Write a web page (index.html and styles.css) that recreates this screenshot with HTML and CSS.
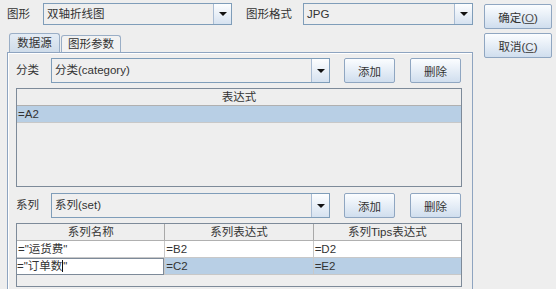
FILE: index.html
```html
<!DOCTYPE html>
<html lang="zh-CN">
<head>
    <meta charset="UTF-8">
    <title>图形</title>
    <link rel="stylesheet" href="styles.css">
</head>
<body>
    <div class="dialog">
        <div class="main">
            <div class="top-row">
                <span class="label label-chart">图形</span>
                <div class="combo combo-chart">
                    <span class="combo-text">双轴折线图</span>
                    <span class="combo-arrow"></span>
                </div>
                <span class="label label-format">图形格式</span>
                <div class="combo combo-format">
                    <span class="combo-text">JPG</span>
                    <span class="combo-arrow"></span>
                </div>
            </div>

            <div class="tabs">
                <span class="tab tab-active">数据源</span>
                <span class="tab">图形参数</span>
            </div>

            <div class="panel">
                <div class="field-row">
                    <span class="label field-label">分类</span>
                    <div class="combo combo-wide">
                        <span class="combo-text">分类(category)</span>
                        <span class="combo-arrow"></span>
                    </div>
                    <button class="btn btn-small btn-add">添加</button>
                    <button class="btn btn-small btn-del">删除</button>
                </div>

                <div class="table table-category">
                    <div class="thead">
                        <div class="th">表达式</div>
                    </div>
                    <div class="tr">
                        <div class="td td-selected">=A2</div>
                    </div>
                </div>

                <div class="field-row field-row-series">
                    <span class="label field-label">系列</span>
                    <div class="combo combo-wide">
                        <span class="combo-text">系列(set)</span>
                        <span class="combo-arrow"></span>
                    </div>
                    <button class="btn btn-small btn-add">添加</button>
                    <button class="btn btn-small btn-del">删除</button>
                </div>

                <div class="table table-series">
                    <div class="thead">
                        <div class="th">系列名称</div>
                        <div class="th">系列表达式</div>
                        <div class="th">系列Tips表达式</div>
                    </div>
                    <div class="tr">
                        <div class="td">="运货费"</div>
                        <div class="td">=B2</div>
                        <div class="td">=D2</div>
                    </div>
                    <div class="tr">
                        <div class="td td-editing">="订单数<span class="caret"></span>"</div>
                        <div class="td td-selected">=C2</div>
                        <div class="td td-selected">=E2</div>
                    </div>
                </div>
            </div>
        </div>

        <div class="side">
            <button class="btn btn-dialog">确定(<u>O</u>)</button>
            <button class="btn btn-dialog">取消(<u>C</u>)</button>
        </div>
    </div>
</body>
</html>
```

FILE: styles.css
```css
body {
    margin: 0;
    height: 289px;
    overflow: hidden;
    background-color: #eeeeee;
    font-family: "Liberation Sans", "Noto Sans CJK SC", sans-serif;
    font-size: 11.5px;
    color: #333333;
}

.dialog {
    display: flex;
    padding-left: 7px;
}

.main {
    width: 466px;
}

.label {
    line-height: 22px;
}

.top-row {
    display: flex;
    align-items: center;
    height: 22px;
    margin-top: 3px;
}

.label-chart {
    width: 36px;
}

.label-format {
    width: 57px;
    margin-left: 14px;
}

.combo {
    display: flex;
    box-sizing: border-box;
    height: 100%;
    border: 1px solid #7f9db9;
    background-color: #efefef;
}

.combo-chart {
    width: 189px;
}

.combo-format {
    width: 170px;
}

.combo-text {
    flex: 1;
    padding-left: 3px;
    line-height: 20px;
    white-space: nowrap;
}

.combo-arrow {
    position: relative;
    width: 17px;
    border-left: 1px solid #a9bcd3;
    background: linear-gradient(#fdfeff, #d6e2f0);
}

.combo-arrow::after {
    content: "";
    position: absolute;
    left: 5px;
    top: 50%;
    margin-top: -2px;
    border-left: 4px solid transparent;
    border-right: 4px solid transparent;
    border-top: 4px solid #111111;
}

.tabs {
    display: flex;
    align-items: flex-end;
    height: 19px;
    margin-top: 8px;
    margin-left: 2px;
}

.tab {
    box-sizing: border-box;
    height: 17px;
    width: 60px;
    margin-left: 1px;
    border: 1px solid #9aaec6;
    border-bottom: none;
    border-radius: 3px 3px 0 0;
    background-color: #f2f2f2;
    text-align: center;
    line-height: 16px;
}

.tab-active {
    width: 51px;
    height: 19px;
    margin-left: 0;
    background: linear-gradient(#e4ecf5, #cfdcea);
    line-height: 18px;
}

.panel {
    box-sizing: border-box;
    height: 245px;
    padding: 5px 10px 0 8px;
    border: 1px solid #8ea4c0;
    border-bottom: none;
    box-shadow: inset 1px 1px 0 #ffffff;
}

.field-row {
    display: flex;
    height: 25px;
}

.field-row-series {
    margin-top: 6px;
}

.field-label {
    width: 36px;
    line-height: 25px;
    margin-left: -1px;
    padding-left: 1px;
    box-sizing: border-box;
}

.combo-wide {
    width: 279px;
}

.combo-wide .combo-text {
    line-height: 23px;
}

.btn {
    box-sizing: border-box;
    padding: 0;
    border: 1px solid #8fa6c1;
    border-radius: 2px;
    background: linear-gradient(#fbfdff, #d0deee);
    font-family: "Liberation Sans", "Noto Sans CJK SC", sans-serif;
    font-size: 11.5px;
    color: #333333;
}

.btn u {
    color: #555555;
}

.btn-small {
    width: 51px;
    height: 25px;
}

.btn-add {
    margin-left: 14px;
}

.btn-del {
    margin-left: 15px;
}

.table {
    box-sizing: border-box;
    margin-top: 5px;
    border: 1px solid #7d8a99;
    background-color: #eeeeee;
}

.table-category {
    height: 99px;
}

.table-series {
    height: 64px;
}

.thead,
.tr {
    display: flex;
    height: 17px;
}

.thead {
    border-bottom: 1px solid #b0b0b0;
    box-sizing: border-box;
    background-color: #eeeeee;
}

.th {
    flex: 1;
    text-align: center;
    line-height: 16px;
    border-left: 1px solid #a8a8a8;
}

.th:first-child {
    border-left: none;
}

.td {
    flex: 1;
    box-sizing: border-box;
    padding-left: 1px;
    line-height: 16px;
    background-color: #ffffff;
    border-left: 1px solid #c8c8c8;
    border-bottom: 1px solid #c8c8c8;
    white-space: nowrap;
}

.td:first-child {
    border-left: none;
}

.td-selected {
    background-color: #b8cfe5;
}

.td-editing {
    border: 1px solid #7d8a99;
    border-left: none;
    padding-left: 0;
    line-height: 15px;
}

.caret {
    display: inline-block;
    width: 1px;
    height: 12px;
    vertical-align: -2px;
    background-color: #111111;
}

.side {
    display: flex;
    flex-direction: column;
    gap: 4px;
    margin-left: 11px;
    padding-top: 4px;
}

.btn-dialog {
    width: 68px;
    height: 25px;
}
```
